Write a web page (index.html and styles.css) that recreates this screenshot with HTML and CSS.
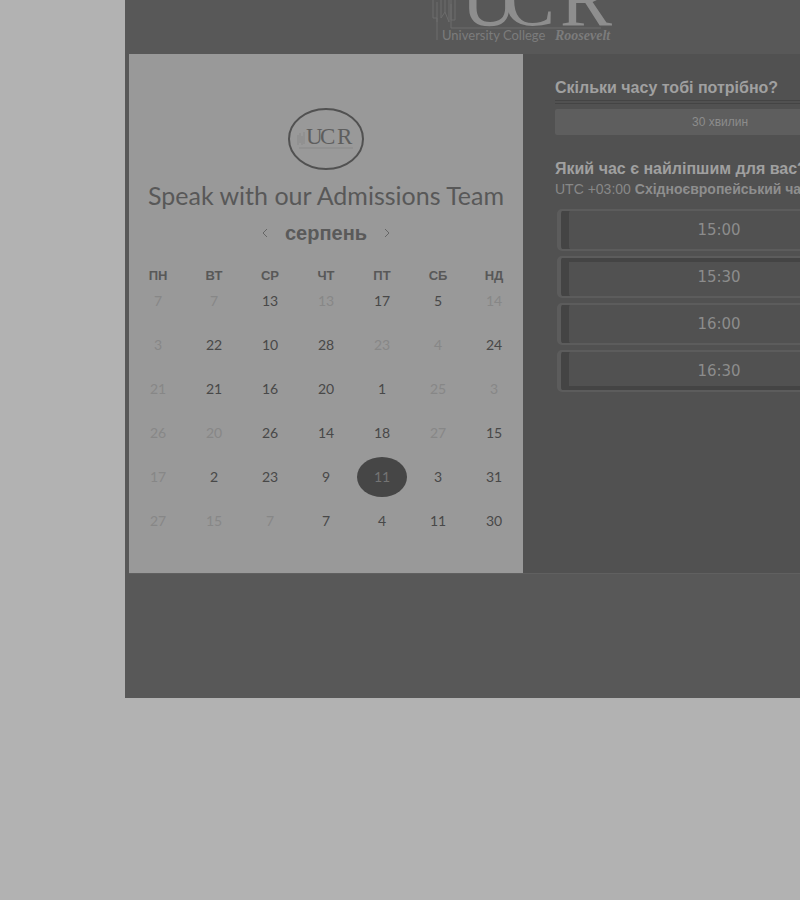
FILE: index.html
```html
<!DOCTYPE html>
<html lang="uk">
<head>
<meta charset="utf-8">
<title>Speak with our Admissions Team</title>
<link rel="stylesheet" href="styles.css">
</head>
<body>
<main class="page">
  <header class="brand">
    <svg class="brand-logo" viewBox="0 0 184 44" role="img" aria-label="UCR University College Roosevelt">
      <g class="brand-lines">
        <path d="M2 0V18H6V40M6 2V22M10 0V18L14 12L18 22V0M14 0V12M20 0V20H24V0M20 4V28H170"/>
      </g>
      <g class="brand-letters">
        <text x="30" y="25">U</text>
        <text x="72" y="25">C</text>
        <text x="129" y="25">R</text>
      </g>
      <text class="brand-name" x="11" y="40">University College</text>
      <text class="brand-name-accent" x="124" y="40">Roosevelt</text>
    </svg>
  </header>
  <div class="booking">
    <section class="calendar">
      <svg class="avatar" viewBox="0 0 78 64" role="img" aria-label="UCR">
        <ellipse class="avatar-ring" cx="39" cy="32" rx="37" ry="30"/>
        <path class="avatar-mark" d="M11 28V38M13 26V36M15 29V38M17 25V37M12 41H66"/>
        <g class="avatar-letters">
          <text x="19" y="37">U</text>
          <text x="33" y="37">C</text>
          <text x="50" y="37">R</text>
        </g>
      </svg>
      <h1 class="title">Speak with our Admissions Team</h1>
      <div class="month">
        <button class="month-nav" type="button" aria-label="Попередній місяць"><svg viewBox="0 0 8 10"><path d="M6 1L2 5L6 9"/></svg></button>
        <h2 class="month-name">серпень</h2>
        <button class="month-nav" type="button" aria-label="Наступний місяць"><svg viewBox="0 0 8 10"><path d="M2 1L6 5L2 9"/></svg></button>
      </div>
      <table class="days">
        <thead><tr><th>ПН</th><th>ВТ</th><th>СР</th><th>ЧТ</th><th>ПТ</th><th>СБ</th><th>НД</th></tr></thead>
        <tbody>
          <tr><td><button disabled>7</button></td><td><button disabled>7</button></td><td><button>13</button></td><td><button disabled>13</button></td><td><button>17</button></td><td><button>5</button></td><td><button disabled>14</button></td></tr>
          <tr><td><button disabled>3</button></td><td><button>22</button></td><td><button>10</button></td><td><button>28</button></td><td><button disabled>23</button></td><td><button disabled>4</button></td><td><button>24</button></td></tr>
          <tr><td><button disabled>21</button></td><td><button>21</button></td><td><button>16</button></td><td><button>20</button></td><td><button>1</button></td><td><button disabled>25</button></td><td><button disabled>3</button></td></tr>
          <tr><td><button disabled>26</button></td><td><button disabled>20</button></td><td><button>26</button></td><td><button>14</button></td><td><button>18</button></td><td><button disabled>27</button></td><td><button>15</button></td></tr>
          <tr><td><button disabled>17</button></td><td><button>2</button></td><td><button>23</button></td><td><button>9</button></td><td><button class="selected" aria-pressed="true">11</button></td><td><button>3</button></td><td><button>31</button></td></tr>
          <tr><td><button disabled>27</button></td><td><button disabled>15</button></td><td><button disabled>7</button></td><td><button>7</button></td><td><button>4</button></td><td><button>11</button></td><td><button>30</button></td></tr>
        </tbody>
      </table>
    </section>
    <section class="times">
      <h2 class="question question-ruled">Скільки часу тобі потрібно?</h2>
      <button class="duration" type="button">30 хвилин</button>
      <h2 class="question">Який час є найліпшим для вас?</h2>
      <p class="zone">UTC +03:00 <b>Східноєвропейський час</b></p>
      <div class="slots">
        <button class="slot" type="button">15:00</button>
        <button class="slot slot-top" type="button">15:30</button>
        <button class="slot" type="button">16:00</button>
        <button class="slot slot-bottom" type="button">16:30</button>
      </div>
    </section>
  </div>
</main>
</body>
</html>
```

FILE: styles.css
```css
* { box-sizing: border-box; }

body {
  margin: 0;
  background: #b2b2b2;
  font-family: "Liberation Sans", sans-serif;
  overflow: hidden;
}

button { font: inherit; border: 0; padding: 0; background: none; color: inherit; }
h1, h2, p { margin: 0; }

.page {
  margin-left: 125px;
  min-width: 796px;
  padding: 0 4px 124px;
  background: #585858;
}

.brand {
  display: flex;
  justify-content: center;
  height: 54px;
}
.brand-logo { width: 184px; height: 44px; }
.brand-lines { fill: none; stroke: #6c6c6c; stroke-width: 1; }
.brand-letters { font: 78px "Liberation Serif", serif; fill: #8e8e8e; }
.brand-name { font: 13px Lato, sans-serif; fill: #7c7c7c; }
.brand-name-accent { font: italic bold 14px "Liberation Serif", serif; fill: #7c7c7c; }

.booking {
  display: grid;
  grid-template-columns: 1fr 1fr;
  background: #515151;
  border-bottom: 1px solid #606060;
}

.calendar {
  display: flex;
  flex-direction: column;
  align-items: center;
  padding: 53px 1px 28px;
  background: #999999;
  color: #585858;
}
.avatar { width: 78px; height: 64px; }
.avatar-ring { fill: none; stroke: #515151; stroke-width: 2; }
.avatar-mark { fill: none; stroke: #898989; stroke-width: 1; }
.avatar-letters { font: 23px "Liberation Serif", serif; fill: #5e5e5e; }

.title {
  margin-top: 8px;
  font: 25px/32px Lato, sans-serif;
  white-space: nowrap;
}

.month {
  display: flex;
  align-items: center;
  gap: 16px;
  margin-top: 8px;
}
.month-name { font-size: 20px; line-height: 28px; font-weight: bold; color: #5a5a5a; }
.month-nav { display: flex; justify-content: center; width: 8px; }
.month-nav svg { width: 8px; height: 10px; fill: none; stroke: #666666; stroke-width: 1; }

.days {
  width: 100%;
  margin-top: 24px;
  table-layout: fixed;
  border-collapse: collapse;
}
.days th { padding: 0; font-size: 13px; line-height: 10px; }
.days td { padding: 0 0 4px; text-align: center; }
.days button {
  width: 50px;
  height: 40px;
  border-radius: 50%;
  font: 14px/20px Lato, sans-serif;
  vertical-align: top;
  color: #484848;
}
.days button:disabled { color: #878787; }
.days .selected { background: #464646; color: #747474; }

.times {
  padding: 24px 32px;
  color: #a0a0a0;
}
.question { font-size: 16px; line-height: 20px; white-space: nowrap; }
.question-ruled { padding-bottom: 2px; border-bottom: 4px double #444444; }
.duration {
  display: block;
  width: 100%;
  height: 26px;
  margin: 5px 0 24px;
  border-radius: 2px;
  background: #5e5e5e;
  font-size: 12px;
  color: #8c8c8c;
}
.zone { font-size: 14px; line-height: 20px; color: #888888; white-space: nowrap; }
.zone b { color: #8e8e8e; }

.slots {
  display: grid;
  gap: 5px;
  padding-left: 2px;
  margin-top: 10px;
}
.slot {
  height: 42px;
  padding-right: 6px;
  border: 2px solid #5c5c5c;
  border-left-width: 4px;
  border-radius: 5px;
  box-shadow: inset 8px 0 #444444;
  font: 15px/20px "DejaVu Sans", sans-serif;
  color: #8c8c8c;
}
.slot-top { box-shadow: inset 8px 0 #444444, inset 0 4px #444444; }
.slot-bottom { box-shadow: inset 8px 0 #444444, inset 0 -4px #444444; }
```
